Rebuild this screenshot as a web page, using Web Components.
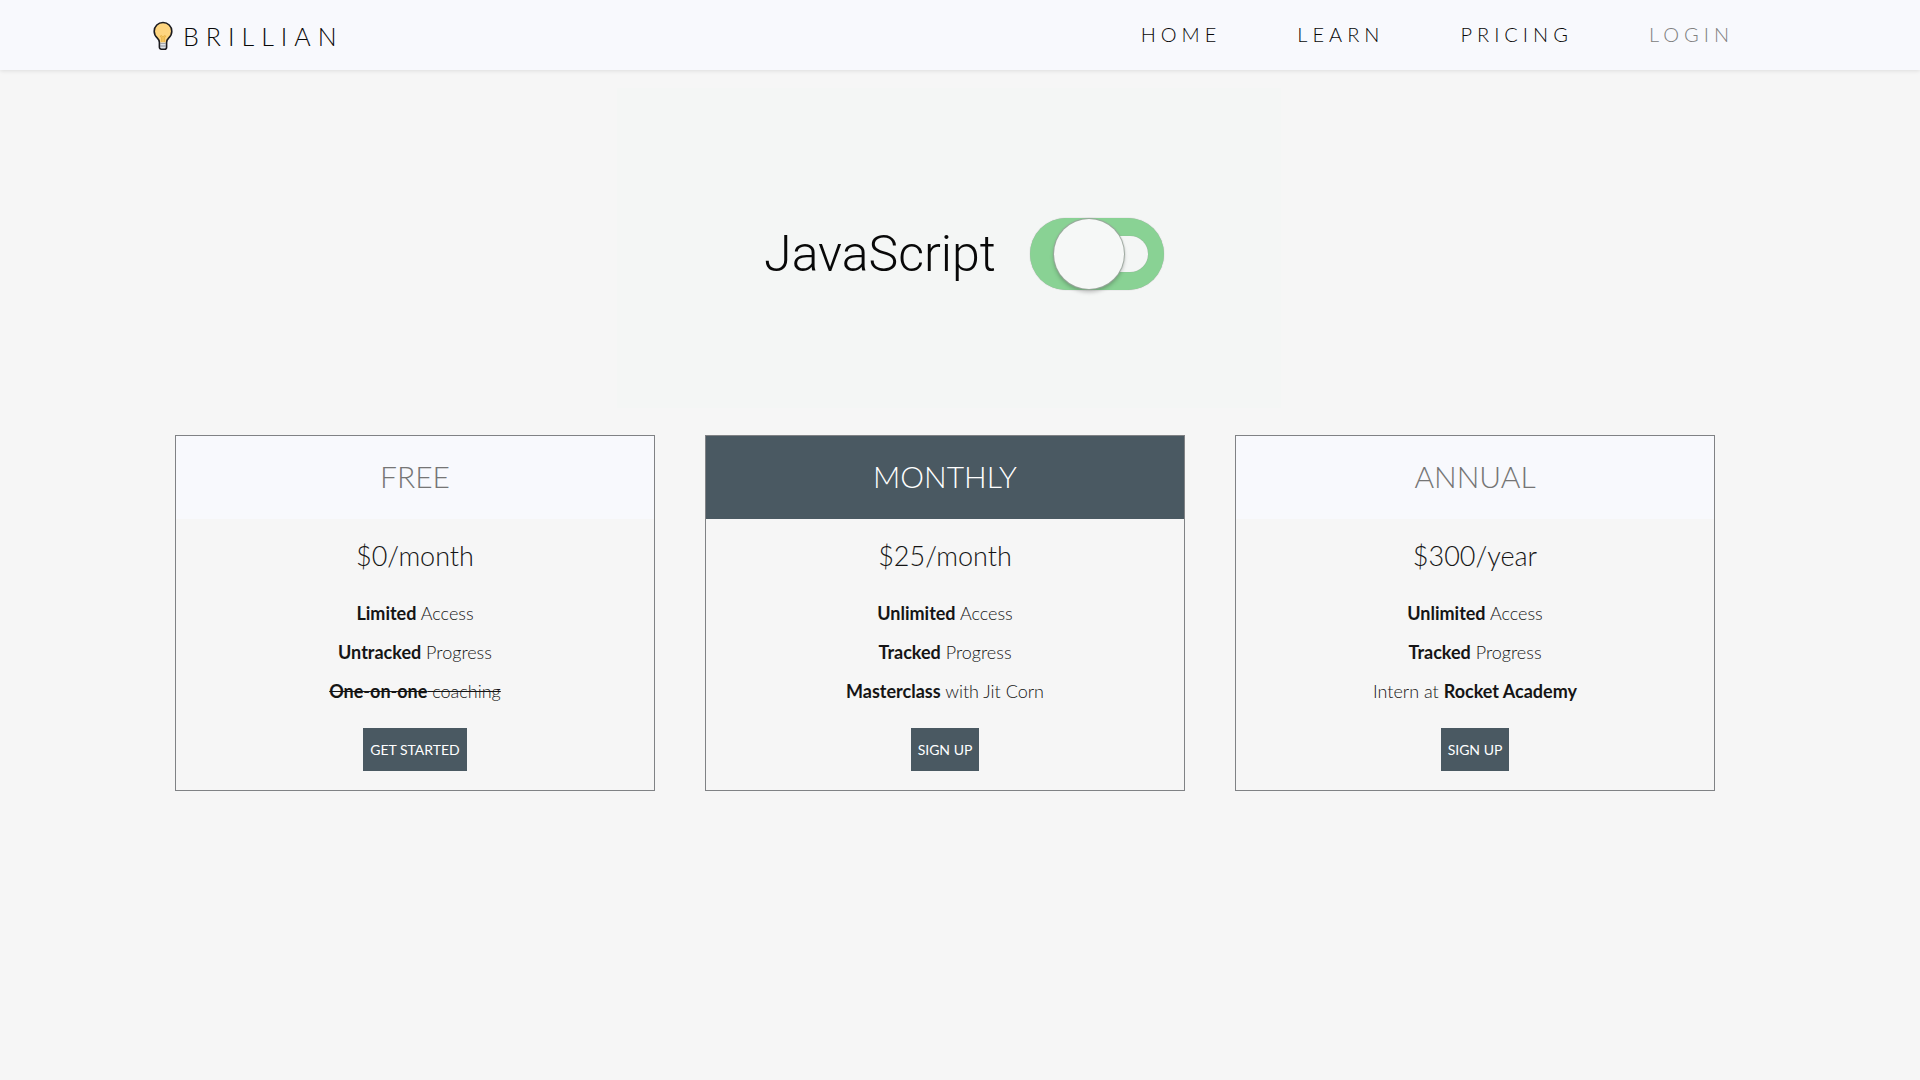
<!DOCTYPE html>
<html lang="en">
<head>
<meta charset="utf-8">
<meta name="viewport" content="width=device-width, initial-scale=1">
<title>Brillian</title>
<style>
  body {
    margin: 0;
    min-height: 100vh;
    background: #f6f6f6;
    color: #151515;
    font-family: Lato, "Open Sans", sans-serif;
    font-weight: 300;
  }
  .plans {
    display: grid;
    grid-template-columns: repeat(3, 1fr);
    gap: 50px;
    padding: 27px 205px 40px 175px;
  }
</style>
</head>
<body>
<site-header>
  <nav-link href="#home">HOME</nav-link>
  <nav-link href="#learn">LEARN</nav-link>
  <nav-link href="#pricing">PRICING</nav-link>
  <nav-link href="#login" muted>LOGIN</nav-link>
</site-header>
<main>
  <hero-switch>JavaScript</hero-switch>
  <section class="plans">
    <plan-card action="GET STARTED">
      <span slot="name">FREE</span>
      <span slot="price">$0/month</span>
      <plan-feature><b>Limited</b> Access</plan-feature>
      <plan-feature><b>Untracked</b> Progress</plan-feature>
      <plan-feature excluded><b>One-on-one</b> coaching</plan-feature>
    </plan-card>
    <plan-card action="SIGN UP" featured>
      <span slot="name">MONTHLY</span>
      <span slot="price">$25/month</span>
      <plan-feature><b>Unlimited</b> Access</plan-feature>
      <plan-feature><b>Tracked</b> Progress</plan-feature>
      <plan-feature><b>Masterclass</b> with Jit Corn</plan-feature>
    </plan-card>
    <plan-card action="SIGN UP">
      <span slot="name">ANNUAL</span>
      <span slot="price">$300/year</span>
      <plan-feature><b>Unlimited</b> Access</plan-feature>
      <plan-feature><b>Tracked</b> Progress</plan-feature>
      <plan-feature>Intern at <b>Rocket Academy</b></plan-feature>
    </plan-card>
  </section>
</main>
<script>
const define = (name, markup, setup) => {
  const template = document.createElement('template');
  template.innerHTML = markup;
  customElements.define(name, class extends HTMLElement {
    constructor() {
      super();
      this.attachShadow({ mode: 'open' }).append(template.content.cloneNode(true));
    }
    connectedCallback() {
      if (setup) setup(this, this.shadowRoot);
    }
  });
};

define('site-header', `
  <style>
    :host { display: block; background: #f8f9fd; box-shadow: 0 1px 4px rgba(0, 0, 0, .1); }
    header { display: flex; align-items: center; justify-content: space-between; height: 70px; padding: 0 186px 0 153px; }
    .brand { display: flex; align-items: center; gap: 10px; padding-top: 2px; color: #080808; font-size: 25px; line-height: 30px; letter-spacing: 7px; text-decoration: none; }
    svg { width: 20px; height: 30px; }
    nav { display: flex; gap: 76px; padding-bottom: 2px; }
  </style>
  <header>
    <a class="brand" href="#home"><svg viewBox="0 0 20 30" aria-hidden="true">
      <path d="M6.400 22.500h7.200v3.700a2 2 0 0 1-2 2H8.400a2 2 0 0 1-2-2z" fill="#dfe3e8"/>
      <path d="M10 1.500C5.200 1.500 1.200 5.300 1.200 10.300c0 3 1.300 5.200 3.200 6.900 1.400 1.300 2 2.400 2 4.400h7.200c0-2 .6-3.100 2-4.400 1.900-1.700 3.200-3.900 3.200-6.900C18.800 5.300 14.800 1.500 10 1.500z" fill="#fed57f"/>
      <path d="M8.400 21v-4.500l-1.500-1.200 1.500-.8 1.600 1.300 1.600-1.300 1.500.8-1.500 1.200V21" fill="#f3c25b" stroke="#e3ad43" stroke-width=".7"/>
      <path d="M10 1.500C5.200 1.500 1.200 5.300 1.200 10.300c0 3 1.300 5.200 3.200 6.900 1.400 1.300 2 2.400 2 4.400v4.600a2 2 0 0 0 2 2h3.200a2 2 0 0 0 2-2v-4.600c0-2 .6-3.100 2-4.400 1.900-1.700 3.200-3.900 3.200-6.900C18.800 5.300 14.800 1.500 10 1.500z" fill="none" stroke="#1b1b1f" stroke-width="1.600"/>
      <path d="M7.200 22.300h5.600M7.200 25h5.600" stroke="#777b80" stroke-width=".8"/>
    </svg>BRILLIAN</a>
    <nav><slot></slot></nav>
  </header>`);

define('nav-link', `
  <style>
    :host { display: block; color: #080808; }
    :host([muted]) { color: #808080; }
    a { color: inherit; font-size: 20px; line-height: 24px; letter-spacing: 5px; text-decoration: none; }
  </style>
  <a><slot></slot></a>`, (host, root) => {
  root.querySelector('a').href = host.getAttribute('href');
});

define('hero-switch', `
  <style>
    :host { display: block; padding: 18px 200px 0 177px; }
    .panel { display: flex; align-items: center; justify-content: center; gap: 34px; max-width: 664px; height: 320px; margin: 0 auto; box-sizing: border-box; padding: 12px 0 0 31px; background: #f4f6f5; }
    label { color: #080808; font: 300 50px/64px Roboto, sans-serif; }
    input { appearance: none; position: relative; width: 134px; height: 72px; margin: 0; border-radius: 36px; background: #89d294; box-shadow: 0 0 1px #999; }
    input::before { content: ""; position: absolute; right: 16px; top: 18px; width: 58px; height: 36px; border-radius: 18px; background: #f4f6f5; box-shadow: 0 0 1px #999; }
    input::after { content: ""; position: absolute; left: 24px; top: 1px; width: 70px; height: 70px; border-radius: 50%; background: #f6f8f7; box-shadow: 0 0 1px 1px #9aa59c, 0 3px 4px rgba(0, 0, 0, .25); }
  </style>
  <div class="panel">
    <label for="toggle"><slot></slot></label>
    <input id="toggle" type="checkbox" role="switch" checked>
  </div>`);

define('plan-feature', `
  <style>
    :host { display: block; font-size: 18px; line-height: 24px; }
    :host([excluded]) { text-decoration: line-through; }
    ::slotted(b) { font-weight: 700; }
  </style>
  <slot></slot>`);

define('plan-card', `
  <style>
    :host { display: block; border: 1px solid #808285; text-align: center; }
    h2 { margin: 0; padding: 20px 0 23px; background: #f8f9fd; color: #757575; font-size: 30px; line-height: 40px; font-weight: 300; }
    :host([featured]) h2 { background: #4a5962; color: #fff; }
    .body { display: flex; flex-direction: column; align-items: center; padding: 21px 10px 19px; }
    .price { margin: 0 0 29px; font-size: 27px; line-height: 32px; }
    .features { display: grid; gap: 15px; margin-bottom: 25px; }
    button { height: 43px; padding: 0 7px; border: 0; background: #4a5962; color: #fff; font: 400 14px/20px Lato, "Open Sans", sans-serif; }
  </style>
  <h2><slot name="name"></slot></h2>
  <div class="body">
    <p class="price"><slot name="price"></slot></p>
    <div class="features"><slot></slot></div>
    <button type="button"></button>
  </div>`, (host, root) => {
  root.querySelector('button').textContent = host.getAttribute('action');
});
</script>
</body>
</html>
